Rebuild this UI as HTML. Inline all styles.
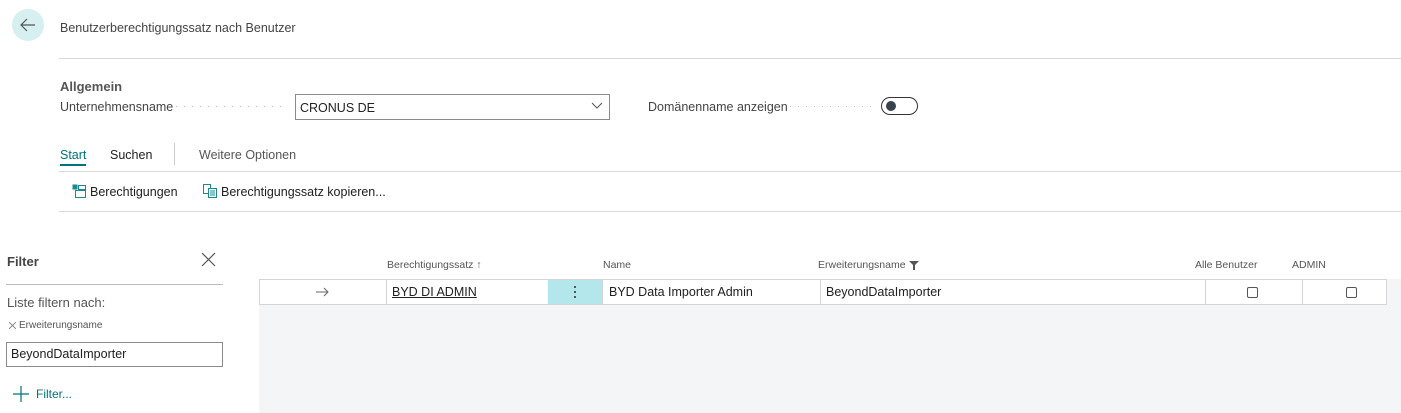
<!DOCTYPE html>
<html><head><style>
*{margin:0;padding:0;box-sizing:border-box}
body{width:1401px;height:413px;background:#fff;font-family:"Liberation Sans",sans-serif;color:#212121;position:relative;overflow:hidden;font-size:13px}
.a{position:absolute;white-space:nowrap}
.hl{position:absolute;height:1px;background:#d9d9d9}
.cb{position:absolute;width:11px;height:11px;border:1px solid #555;border-radius:2px;background:#fff}
.dots{position:absolute;height:1px;background-image:linear-gradient(90deg,#bbb 1px,transparent 1px);background-size:8px 1px}
</style></head><body>
<div class="a" style="left:12px;top:9px;width:32px;height:32px;border-radius:50%;background:#d6eff1"></div>
<svg class="a" style="left:19px;top:17px" width="18" height="16"><path d="M16 8H2M8 2L2 8l6 6" stroke="#555" stroke-width="1.2" fill="none"/></svg>
<div class="a" style="left:60px;top:21px;font-size:12.5px;color:#444">Benutzerberechtigungssatz nach Benutzer</div>
<div class="hl" style="left:59px;top:58px;width:1342px"></div>
<div class="a" style="left:60px;top:79px;font-size:13px;font-weight:bold;color:#555">Allgemein</div>
<div class="a" style="left:60px;top:100px;font-size:12.5px;color:#444">Unternehmensname</div>
<div class="dots" style="left:176px;top:106px;width:112px"></div>
<div class="a" style="left:295px;top:94px;width:315px;height:26px;border:1px solid #8a8a8a"></div>
<div class="a" style="left:300px;top:101px;font-size:12.5px">CRONUS DE</div>
<svg class="a" style="left:591px;top:102px" width="12" height="8"><path d="M1 1l5 5 5-5" stroke="#555" fill="none"/></svg>
<div class="a" style="left:648px;top:100px;font-size:12.5px;color:#444">Domänenname anzeigen</div>
<div class="dots" style="left:790px;top:106px;width:84px"></div>
<div class="a" style="left:881px;top:97px;width:37px;height:18px;border:1.5px solid #333;border-radius:9px"></div>
<div class="a" style="left:886px;top:101px;width:10px;height:10px;border-radius:50%;background:#3a4250"></div>
<div class="a" style="left:60px;top:148px;font-size:12.5px;color:#00727a">Start</div>
<div class="a" style="left:60px;top:164px;width:26px;height:2px;background:#00727a"></div>
<div class="a" style="left:110px;top:148px;font-size:12.5px">Suchen</div>
<div class="a" style="left:174px;top:143px;width:1px;height:22px;background:#ccc"></div>
<div class="a" style="left:199px;top:148px;font-size:12.5px;color:#555">Weitere Optionen</div>
<div class="hl" style="left:59px;top:171px;width:1342px"></div>
<svg class="a" style="left:72px;top:184px" width="14" height="14"><rect x="0.5" y="0.5" width="5" height="5" fill="#1a8a8f"/><rect x="6.5" y="1.5" width="7" height="4" fill="none" stroke="#1a8a8f"/><rect x="3.5" y="6.5" width="10" height="7" fill="none" stroke="#1a8a8f"/></svg>
<div class="a" style="left:90px;top:185px;font-size:12.5px">Berechtigungen</div>
<svg class="a" style="left:203px;top:184px" width="14" height="14"><rect x="0.5" y="0.5" width="7" height="9" fill="none" stroke="#1a8a8f"/><rect x="5.5" y="4.5" width="8" height="9" fill="#fff" stroke="#1a8a8f"/><path d="M7 7h5M7 9h5M7 11h5" stroke="#1a8a8f"/></svg>
<div class="a" style="left:221px;top:185px;font-size:12.5px">Berechtigungssatz kopieren...</div>
<div class="hl" style="left:59px;top:211px;width:1342px"></div>
<div class="a" style="left:7px;top:254px;font-size:13px;font-weight:bold;color:#444">Filter</div>
<svg class="a" style="left:201px;top:252px" width="15" height="15"><path d="M1 1l13 13M14 1L1 14" stroke="#555" stroke-width="1.2"/></svg>
<div class="hl" style="left:6px;top:284px;width:217px;background:#bbb"></div>
<div class="a" style="left:7px;top:295px;font-size:13px;color:#555">Liste filtern nach:</div>
<svg class="a" style="left:9px;top:322px" width="7" height="7"><path d="M0 0l7 7M7 0L0 7" stroke="#777" stroke-width="0.8"/></svg>
<div class="a" style="left:19px;top:320px;font-size:10px;color:#555">Erweiterungsname</div>
<div class="a" style="left:6px;top:342px;width:217px;height:25px;border:1px solid #8a8a8a"></div>
<div class="a" style="left:11px;top:347px;font-size:12.5px">BeyondDataImporter</div>
<svg class="a" style="left:13px;top:386px" width="16" height="16"><path d="M8 0v16M0 8h16" stroke="#00727a" stroke-width="1.2"/></svg>
<div class="a" style="left:36px;top:387px;font-size:12px;color:#00727a">Filter...</div>
<div class="a" style="left:259px;top:279px;width:1142px;height:134px;background:#f4f5f6"></div>
<div class="a" style="left:387px;top:259px;font-size:10.5px;color:#555">Berechtigungssatz ↑</div>
<div class="a" style="left:603px;top:259px;font-size:10.5px;color:#555">Name</div>
<div class="a" style="left:818px;top:259px;font-size:10.5px;color:#555">Erweiterungsname</div>
<svg class="a" style="left:909px;top:261px" width="10" height="9"><path d="M0 0h10L6 4v5H4V4z" fill="#555"/></svg>
<div class="a" style="left:1195px;top:259px;font-size:10.5px;color:#555">Alle Benutzer</div>
<div class="a" style="left:1292px;top:259px;font-size:10.5px;color:#555">ADMIN</div>
<div class="a" style="left:259px;top:279px;width:1128px;height:26px;background:#fff;border:1px solid #d5d5d5"></div>
<div class="a" style="left:548px;top:280px;width:54px;height:24px;background:#b4e7eb"></div>
<div class="a" style="left:386px;top:280px;width:1px;height:24px;background:#d5d5d5"></div>
<div class="a" style="left:602px;top:280px;width:1px;height:24px;background:#d5d5d5"></div>
<div class="a" style="left:820px;top:280px;width:1px;height:24px;background:#d5d5d5"></div>
<div class="a" style="left:1205px;top:280px;width:1px;height:24px;background:#d5d5d5"></div>
<div class="a" style="left:1302px;top:280px;width:1px;height:24px;background:#d5d5d5"></div>
<svg class="a" style="left:316px;top:287px" width="13" height="10"><path d="M0 5h12M8 1l4 4-4 4" stroke="#666" fill="none"/></svg>
<div class="a" style="left:392px;top:285px;font-size:12.5px;text-decoration:underline">BYD DI ADMIN</div>
<div class="a" style="left:574px;top:286px;width:2px;height:2px;background:#555"></div>
<div class="a" style="left:574px;top:291px;width:2px;height:2px;background:#555"></div>
<div class="a" style="left:574px;top:296px;width:2px;height:2px;background:#555"></div>
<div class="a" style="left:609px;top:285px;font-size:12.5px">BYD Data Importer Admin</div>
<div class="a" style="left:826px;top:285px;font-size:12.5px">BeyondDataImporter</div>
<div class="cb" style="left:1247px;top:287px"></div>
<div class="cb" style="left:1346px;top:287px"></div>
</body></html>
